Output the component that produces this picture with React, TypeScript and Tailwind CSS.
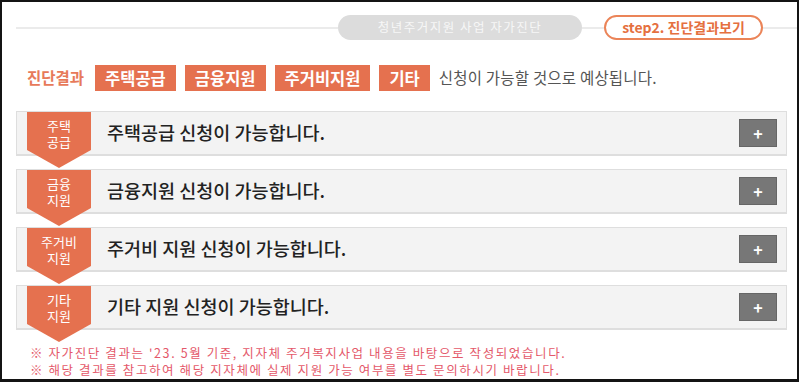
const items = [
  { tag: ["주택", "공급"], title: "주택공급 신청이 가능합니다." },
  { tag: ["금융", "지원"], title: "금융지원 신청이 가능합니다." },
  { tag: ["주거비", "지원"], title: "주거비 지원 신청이 가능합니다." },
  { tag: ["기타", "지원"], title: "기타 지원 신청이 가능합니다." },
]

const badges = ["주택공급", "금융지원", "주거비지원", "기타"]

export default function App() {
  return (
    <div className="w-[800px] h-[383px] bg-white font-['Noto_Sans_CJK_KR','Noto_Sans',sans-serif]">
      <div className="w-[799px] h-[382px] border-2 border-b-[3px] border-[#141414] flex flex-col">
        {/* Step header */}
        <div className="flex items-center pl-[14px] pt-[13px]">
          <div className="flex-1 h-[2px] bg-[#ebebeb]" />
          <div className="w-[244px] h-[25px] rounded-full bg-[#dcdcdc] text-[#f7f7f7] text-[12.5px] tracking-[1.5px] flex items-center justify-center">
            청년주거지원 사업 자가진단
          </div>
          <div className="w-[22px] h-[2px] bg-[#ebebeb]" />
          <div className="w-[159px] h-[25px] rounded-full border-2 border-[#eb8458] text-[#e5703f] text-[14px] font-bold flex items-center justify-center">
            step2. 진단결과보기
          </div>
          <div className="w-[34px] h-[2px] bg-[#ebebeb]" />
        </div>

        {/* Result summary */}
        <div className="flex items-center mt-[25px] pl-[25px]">
          <span className="text-[15.5px] font-bold text-[#e77a5a] mr-[11px]">진단결과</span>
          <div className="flex gap-[9px]">
            {badges.map((b) => (
              <span
                key={b}
                className="h-[26px] px-[10px] bg-[#e5714f] text-white text-[16.5px] font-bold flex items-center"
              >
                {b}
              </span>
            ))}
          </div>
          <span className="ml-[9px] text-[15.5px] tracking-[0.2px] text-[#555]">신청이 가능할 것으로 예상됩니다.</span>
        </div>

        {/* Accordion */}
        <div className="flex flex-col gap-[13px] mt-[20px] ml-[14px] w-[771px]">
          {items.map((it) => (
            <div
              key={it.title}
              className="relative h-[45px] bg-[#f3f3f3] border border-[#dedede] border-b-2 flex items-center pl-[90px] pr-[9px]"
            >
              <div className="absolute left-[10px] top-0 w-[64px] h-[56px] bg-[#e5714f] [clip-path:polygon(0_0,100%_0,100%_68%,50%_100%,0_68%)] flex flex-col items-center pt-[6px] text-white text-[13px] leading-[16px]">
                <span>{it.tag[0]}</span>
                <span>{it.tag[1]}</span>
              </div>
              <span className="flex-1 text-[18.5px] font-medium text-[#222]">{it.title}</span>
              <button className="w-[38px] h-[28px] bg-[#777] border border-[#666] text-white text-[16px] font-bold flex items-center justify-center leading-none">
                +
              </button>
            </div>
          ))}
        </div>

        {/* Notes */}
        <div className="mt-[14px] pl-[28px] text-[12.5px] leading-[17px] tracking-[1.6px] text-[#e4586a]">
          <p>※ 자가진단 결과는 '23. 5월 기준, 지자체 주거복지사업 내용을 바탕으로 작성되었습니다.</p>
          <p>※ 해당 결과를 참고하여 해당 지자체에 실제 지원 가능 여부를 별도 문의하시기 바랍니다.</p>
        </div>
      </div>
    </div>
  )
}
